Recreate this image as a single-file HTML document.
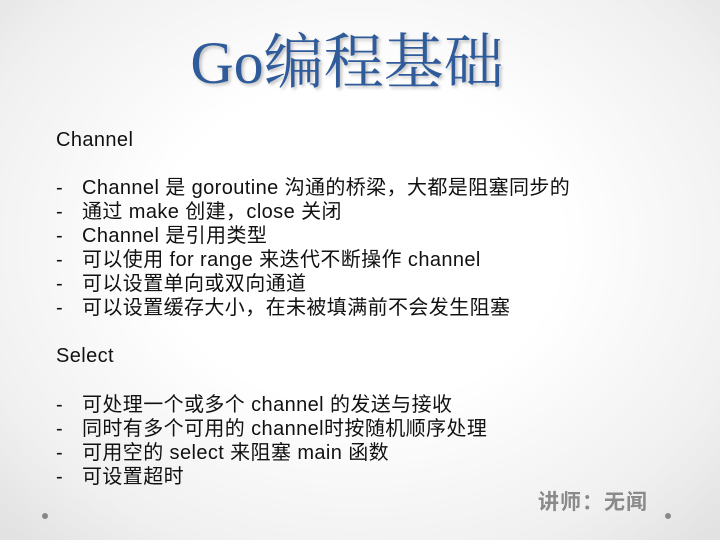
<!DOCTYPE html>
<html><head><meta charset="utf-8"><style>
html,body{margin:0;padding:0}
body{width:720px;height:540px;overflow:hidden;position:relative;background:radial-gradient(ellipse 70% 75% at 50% 45%,#fff 40%,#f0f0f0 80%,#e2e2e2 100%);font-family:"Liberation Sans","Noto Sans CJK SC",sans-serif;color:#111}
h1{position:absolute;left:-13px;width:720px;top:28px;margin:0;text-align:center;font-family:"Liberation Serif","Noto Serif CJK SC",serif;font-weight:normal;font-size:60px;line-height:70px;color:#2f5b9a;text-shadow:2px 2px 3px rgba(0,0,0,.25)}
.l,.d,.t{position:absolute;font-size:20px;line-height:24px;white-space:nowrap;letter-spacing:.4px}
.l,.d{left:56px}
.t{left:82px}
.dot{position:absolute;width:6px;height:6px;border-radius:50%;background:#888}
.sig{position:absolute;left:538px;top:489px;font-size:21px;font-weight:bold;color:#8a8a8a;line-height:28px;letter-spacing:1px}
</style></head><body>
<h1>Go编程基础</h1>
<div class="l" style="top:128px">Channel</div>
<div class="d" style="top:176px">-</div><div class="t" style="top:176px">Channel 是 goroutine 沟通的桥梁，大都是阻塞同步的</div>
<div class="d" style="top:200px">-</div><div class="t" style="top:200px">通过 make 创建，close 关闭</div>
<div class="d" style="top:224px">-</div><div class="t" style="top:224px">Channel 是引用类型</div>
<div class="d" style="top:248px">-</div><div class="t" style="top:248px">可以使用 for range 来迭代不断操作 channel</div>
<div class="d" style="top:272px">-</div><div class="t" style="top:272px">可以设置单向或双向通道</div>
<div class="d" style="top:296px">-</div><div class="t" style="top:296px">可以设置缓存大小，在未被填满前不会发生阻塞</div>
<div class="l" style="top:344px">Select</div>
<div class="d" style="top:393px">-</div><div class="t" style="top:393px">可处理一个或多个 channel 的发送与接收</div>
<div class="d" style="top:417px">-</div><div class="t" style="top:417px">同时有多个可用的 channel时按随机顺序处理</div>
<div class="d" style="top:441px">-</div><div class="t" style="top:441px">可用空的 select 来阻塞 main 函数</div>
<div class="d" style="top:465px">-</div><div class="t" style="top:465px">可设置超时</div>
<div class="sig">讲师：无闻</div>
<div class="dot" style="left:42px;top:513px"></div>
<div class="dot" style="left:665px;top:513px"></div>
</body></html>
